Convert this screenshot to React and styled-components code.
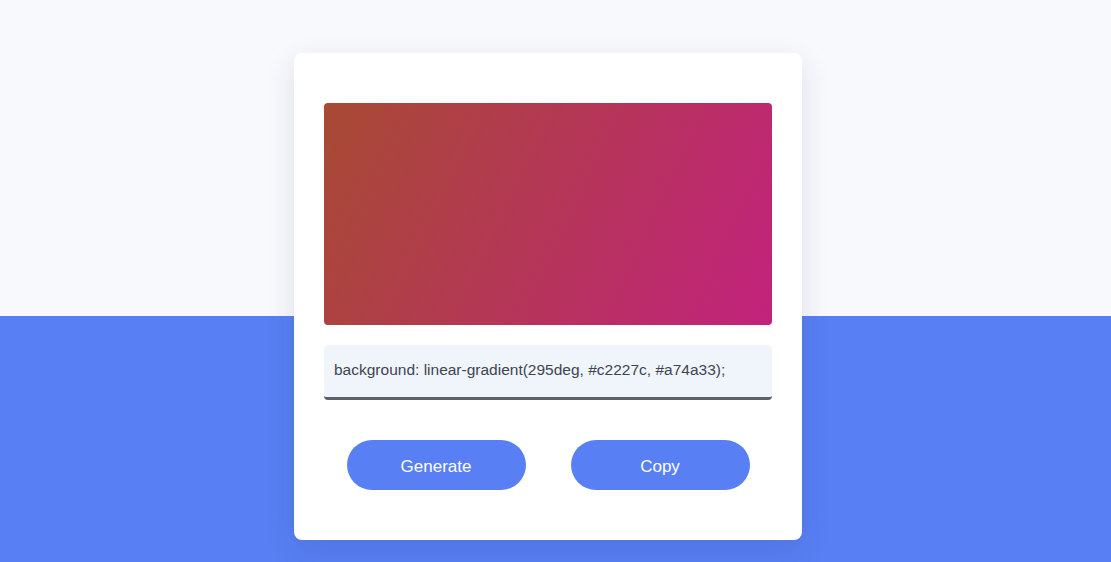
import React, { useState } from 'react';
import styled, { createGlobalStyle } from 'styled-components';

const GlobalStyle = createGlobalStyle`
    * {
        box-sizing: border-box;
    }
    body {
        margin: 0;
        font-family: 'Liberation Sans', Arial, sans-serif;
        background: linear-gradient(to bottom, #f8f9fd 0, #f8f9fd 316px, #587ff3 316px, #587ff3 100%);
        min-height: 100vh;
    }
`;

const Page = styled.div`
    display: flex;
    justify-content: center;
    padding: 53px 15px 0 0;
    min-height: 562px;
`;

const Card = styled.div`
    width: 508px;
    height: 487px;
    background: #fff;
    border-radius: 8px;
    padding: 50px 30px 50px;
    box-shadow: 0 10px 30px rgba(30, 40, 90, 0.12);
    display: flex;
    flex-direction: column;
`;

const Preview = styled.div`
    height: 222px;
    border-radius: 4px;
    background: ${p => p.$bg};
`;

const CodeBox = styled.div`
    margin-top: 20px;
    height: 55px;
    background: #f0f4fb;
    border-radius: 4px;
    border-bottom: 3px solid #5c6068;
    padding: 0 10px 3px;
    display: flex;
    align-items: center;
    font-size: 15.5px;
    color: #3f4451;
`;

const Actions = styled.div`
    margin-top: 40px;
    display: flex;
    justify-content: center;
    gap: 45px;
`;

const Button = styled.button`
    width: 179px;
    height: 50px;
    border: none;
    border-radius: 25px;
    background: #587ff3;
    color: #fff;
    font-family: 'Liberation Sans', Arial, sans-serif;
    font-size: 17px;
    padding-top: 5px;
    cursor: pointer;
`;

const App = () => {
    const [colors] = useState({ deg: 295, a: '#c2227c', b: '#a74a33' });
    const css = `linear-gradient(${colors.deg}deg, ${colors.a}, ${colors.b})`;

    return (
        <>
            <GlobalStyle />
            <Page>
                <Card>
                    <Preview $bg={css} />
                    <CodeBox>background: {css};</CodeBox>
                    <Actions>
                        <Button>Generate</Button>
                        <Button>Copy</Button>
                    </Actions>
                </Card>
            </Page>
        </>
    );
};

export default App;
